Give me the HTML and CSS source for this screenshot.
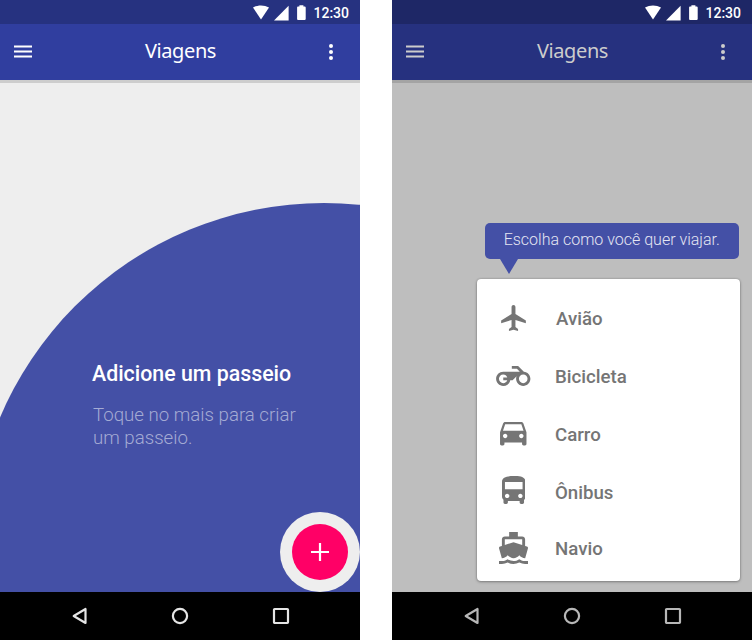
FILE: index.html
```html
<!DOCTYPE html>
<html lang="pt-BR">
<head>
<meta charset="utf-8">
<title>Viagens</title>
<link rel="stylesheet" href="styles.css">
</head>
<body>
<svg class="defs" aria-hidden="true">
  <symbol id="status" viewBox="0 0 54 16">
    <path d="M0 2.6C4.7-.1 11.3-.1 16 2.6L8 14.6z"/>
    <path d="M21 15.4 35.6.8v14.6z"/>
    <path d="M46.7 1.6V.2h-4v1.4h-1.4c-.6 0-.9.4-.9.9v11.6c0 .5.4.9.9.9h6.8c.5 0 .9-.4.9-.9V2.5c0-.5-.4-.9-.9-.9z" transform="translate(3.7)"/>
  </symbol>
  <symbol id="menu" viewBox="0 0 18 13"><path d="M0 .5h18v2H0zM0 5.5h18v2H0zM0 10.5h18v2H0z"/></symbol>
  <symbol id="more" viewBox="0 0 4 16"><circle cx="2" cy="2" r="2"/><circle cx="2" cy="8" r="2"/><circle cx="2" cy="14" r="2"/></symbol>
  <symbol id="back" viewBox="0 0 18 18"><path d="M15.5 2v14L3.7 9z"/></symbol>
  <symbol id="home" viewBox="0 0 18 18"><circle cx="9" cy="9" r="7.1"/></symbol>
  <symbol id="recent" viewBox="0 0 18 18"><rect x="2" y="2" width="14" height="14" rx=".7"/></symbol>
</svg>

<section class="phone">
  <div class="status-bar"><svg class="status-icons"><use href="#status"/></svg><span class="clock">12:30</span></div>
  <header class="app-bar">
    <svg class="menu"><use href="#menu"/></svg>
    <h1 class="title">Viagens</h1>
    <svg class="more"><use href="#more"/></svg>
  </header>
  <main class="screen">
    <div class="blob"></div>
    <div class="intro">
      <h2 class="headline">Adicione um passeio</h2>
      <p class="hint">Toque no mais para criar<br>um passeio.</p>
    </div>
    <div class="fab-ring"><div class="fab"><svg class="plus" viewBox="0 0 18 18"><path d="M7.9 0h2.2v7.9H18v2.2h-7.9V18H7.9v-7.9H0V7.9h7.9z"/></svg></div></div>
  </main>
  <footer class="nav-bar">
    <svg class="nav-icon"><use href="#back"/></svg>
    <svg class="nav-icon"><use href="#home"/></svg>
    <svg class="nav-icon"><use href="#recent"/></svg>
  </footer>
</section>

<section class="phone dimmed">
  <div class="status-bar"><svg class="status-icons"><use href="#status"/></svg><span class="clock">12:30</span></div>
  <header class="app-bar">
    <svg class="menu"><use href="#menu"/></svg>
    <h1 class="title">Viagens</h1>
    <svg class="more"><use href="#more"/></svg>
  </header>
  <main class="screen chooser">
    <div class="fab hidden-fab"></div>
    <div class="tooltip"><span class="tooltip-text">Escolha como você quer viajar.</span></div>
    <ul class="card">
      <li class="row"><span class="icon-cell"><svg class="plane" viewBox="2 2 19 20"><path d="M21 16v-2l-8-5V3.5c0-.83-.67-1.5-1.5-1.5S10 2.67 10 3.5V9l-8 5v2l8-2.5V19l-2 1.5V22l3.5-1 3.5 1v-1.5L13 19v-5.5l8 2.5z"/></svg></span><span class="label label-plane">Avião</span></li>
      <li class="row"><span class="icon-cell"><svg class="bike" viewBox="0 5 24 14"><path d="M19.44 9.03L15.41 5H11v2h3.59l2 2H5c-2.8 0-5 2.2-5 5s2.2 5 5 5c2.46 0 4.45-1.69 4.9-4h1.65l2.77-2.77c-.21.54-.32 1.14-.32 1.77 0 2.8 2.2 5 5 5s5-2.2 5-5c0-2.65-1.97-4.77-4.56-4.97zM7.82 15C7.4 16.15 6.28 17 5 17c-1.63 0-3-1.37-3-3s1.37-3 3-3c1.28 0 2.4.85 2.82 2H5v2h2.82zM19 17c-1.66 0-3-1.34-3-3s1.34-3 3-3 3 1.34 3 3-1.34 3-3 3z"/></svg></span><span class="label">Bicicleta</span></li>
      <li class="row"><span class="icon-cell"><svg class="car" viewBox="3 5 18 16"><path d="M18.92 6.01C18.72 5.42 18.16 5 17.5 5h-11c-.66 0-1.21.42-1.42 1.01L3 12v8c0 .55.45 1 1 1h1c.55 0 1-.45 1-1v-1h12v1c0 .55.45 1 1 1h1c.55 0 1-.45 1-1v-8l-2.08-5.99zM6.5 16c-.83 0-1.5-.67-1.5-1.5S5.67 13 6.5 13s1.5.67 1.5 1.5S7.33 16 6.5 16zm11 0c-.83 0-1.5-.67-1.5-1.5s.67-1.5 1.5-1.5 1.5.67 1.5 1.5-.67 1.5-1.5 1.5zM5 11l1.5-4.5h11L19 11H5z"/></svg></span><span class="label">Carro</span></li>
      <li class="row row-bus"><span class="icon-cell"><svg class="bus" viewBox="4 2 16 19"><path d="M4 16c0 .88.39 1.67 1 2.22V20c0 .55.45 1 1 1h1c.55 0 1-.45 1-1v-1h8v1c0 .55.45 1 1 1h1c.55 0 1-.45 1-1v-1.78c.61-.55 1-1.34 1-2.22V6c0-3.5-3.58-4-8-4s-8 .5-8 4v10zm3.5 1c-.83 0-1.5-.67-1.5-1.5S6.67 14 7.5 14s1.5.67 1.5 1.5S8.33 17 7.5 17zm9 0c-.83 0-1.5-.67-1.5-1.5s.67-1.5 1.5-1.5 1.5.67 1.5 1.5-.67 1.5-1.5 1.5zm1.5-6H6V6h12v5z"/></svg></span><span class="label">Ônibus</span></li>
      <li class="row row-boat"><span class="icon-cell"><svg class="boat" viewBox="2 1 20 22"><path d="M20 21c-1.39 0-2.78-.47-4-1.32-2.44 1.71-5.56 1.71-8 0C6.78 20.53 5.39 21 4 21H2v2h2c1.38 0 2.74-.35 4-.99 2.52 1.29 5.48 1.29 8 0 1.26.65 2.62.99 4 .99h2v-2h-2zM3.95 19H4c1.6 0 3.02-.88 4-2 .98 1.12 2.4 2 4 2s3.02-.88 4-2c.98 1.12 2.4 2 4 2h.05l1.89-6.68c.08-.26.06-.54-.06-.78s-.34-.42-.6-.5L20 10.62V6c0-1.1-.9-2-2-2h-3V1H9v3H6c-1.1 0-2 .9-2 2v4.62l-1.29.42c-.26.08-.48.26-.6.5s-.15.52-.06.78L3.95 19zM6 6h12v3.97L12 8 6 9.97V6z"/></svg></span><span class="label">Navio</span></li>
    </ul>
  </main>
  <footer class="nav-bar">
    <svg class="nav-icon"><use href="#back"/></svg>
    <svg class="nav-icon"><use href="#home"/></svg>
    <svg class="nav-icon"><use href="#recent"/></svg>
  </footer>
</section>
</body>
</html>
```
FILE: styles.css
```css
* { box-sizing: border-box; margin: 0; padding: 0; }
body { display: flex; gap: 32px; width: 752px; height: 640px; overflow: hidden; background: #fff; font-family: Roboto, sans-serif; }
svg { display: block; }
.defs { display: none; }

.phone { --status: #263280; --bar: #303e9f; --bg: #eee; --fg: #fff; --nav: #e5e5e5; --line: #cdcdcd;
  width: 360px; height: 640px; display: flex; flex-direction: column; flex: none; }
.dimmed { --status: #1e2766; --bar: #26317f; --bg: #bebebe; --fg: #ccc; --nav: #b7b7b7; --line: #a4a4a4; }

.status-bar { height: 24px; background: var(--status); display: flex; align-items: center; justify-content: flex-end; padding-right: 11px; gap: 6px; color: #fff; fill: #fff; }
.status-icons { width: 54px; height: 16px; margin-top: 1px; }
.clock { font-size: 14px; font-weight: 500; line-height: 24px; padding-top: 2px; }

.app-bar { height: 56px; background: var(--bar); color: var(--fg); fill: var(--fg); display: flex; align-items: center; justify-content: space-between; padding: 0 27px 1px 14px; }
.menu { width: 18px; height: 13px; }
.more { width: 4px; height: 16px; }
.title { font: 400 20px/28px "Noto Sans", sans-serif; letter-spacing: -.4px; padding-bottom: 2px; }

.screen { height: 512px; position: relative; overflow: hidden; background: var(--bg); border-top: 3px solid var(--line); }
.blob { position: absolute; left: -28px; top: 120px; width: 704px; height: 704px; border-radius: 50%; background: #4450a6; }
.intro { position: relative; padding: 276px 0 0 92px; color: #fff; }
.headline { font-size: 21.35px; font-weight: 500; line-height: 29px; white-space: nowrap; }
.hint { font-size: 18.67px; font-weight: 300; line-height: 23px; margin-top: 16px; padding-left: 1px; color: #a4abd4; }
.fab-ring { position: absolute; right: 0; bottom: 0; width: 80px; height: 80px; padding: 12px; border-radius: 50%; background: #eee; }
.fab { width: 56px; height: 56px; border-radius: 50%; background: #ff0066; display: grid; place-items: center; }
.plus { width: 18px; height: 18px; fill: #fff; }
.hidden-fab { position: absolute; right: 12px; bottom: 12px; background: #cc0052; }

.nav-bar { height: 48px; background: #000; display: flex; justify-content: space-between; align-items: center; padding: 0 70px; }
.nav-icon { width: 18px; height: 18px; fill: none; stroke: var(--nav); stroke-width: 2.2; stroke-linejoin: round; }

.chooser { padding: 139.5px 12px 0 85px; }
.tooltip { position: relative; margin: 0 1.5px 0 8px; height: 36.5px; border-radius: 5px; background: #4450a6; color: #e4e6f3; text-align: center; }
.tooltip::after { content: ""; position: absolute; left: 14.5px; top: 100%; border: 9.5px solid transparent; border-top: 15px solid #4450a6; border-bottom: 0; }
.tooltip-text { font-size: 16px; font-weight: 300; line-height: 33px; white-space: nowrap; }
.card { position: relative; height: 302px; margin-top: 20px; padding-top: 10px; border-radius: 4px; background: #fff; box-shadow: 0 0 2px rgba(0,0,0,.25), 0 1px 3px rgba(0,0,0,.3); list-style: none; }
.row { height: 58px; display: grid; grid-template-columns: 73px auto; align-items: center; color: #757575; fill: #757575; }
.icon-cell { display: grid; justify-content: center; }
.label { font-size: 18.67px; font-weight: 500; line-height: 24px; padding: 1px 0 0 5px; }
.label-plane { padding-left: 6px; }
.plane { width: 25px; height: 26px; }
.bike { width: 34.5px; height: 20px; }
.car { width: 26.5px; height: 23.5px; }
.bus { width: 23.5px; height: 28px; margin-bottom: 4px; }
.boat { width: 29px; height: 32px; margin-bottom: 3px; }
.row-boat { height: 56px; }
.row-boat .label { padding-top: 0; }
```
